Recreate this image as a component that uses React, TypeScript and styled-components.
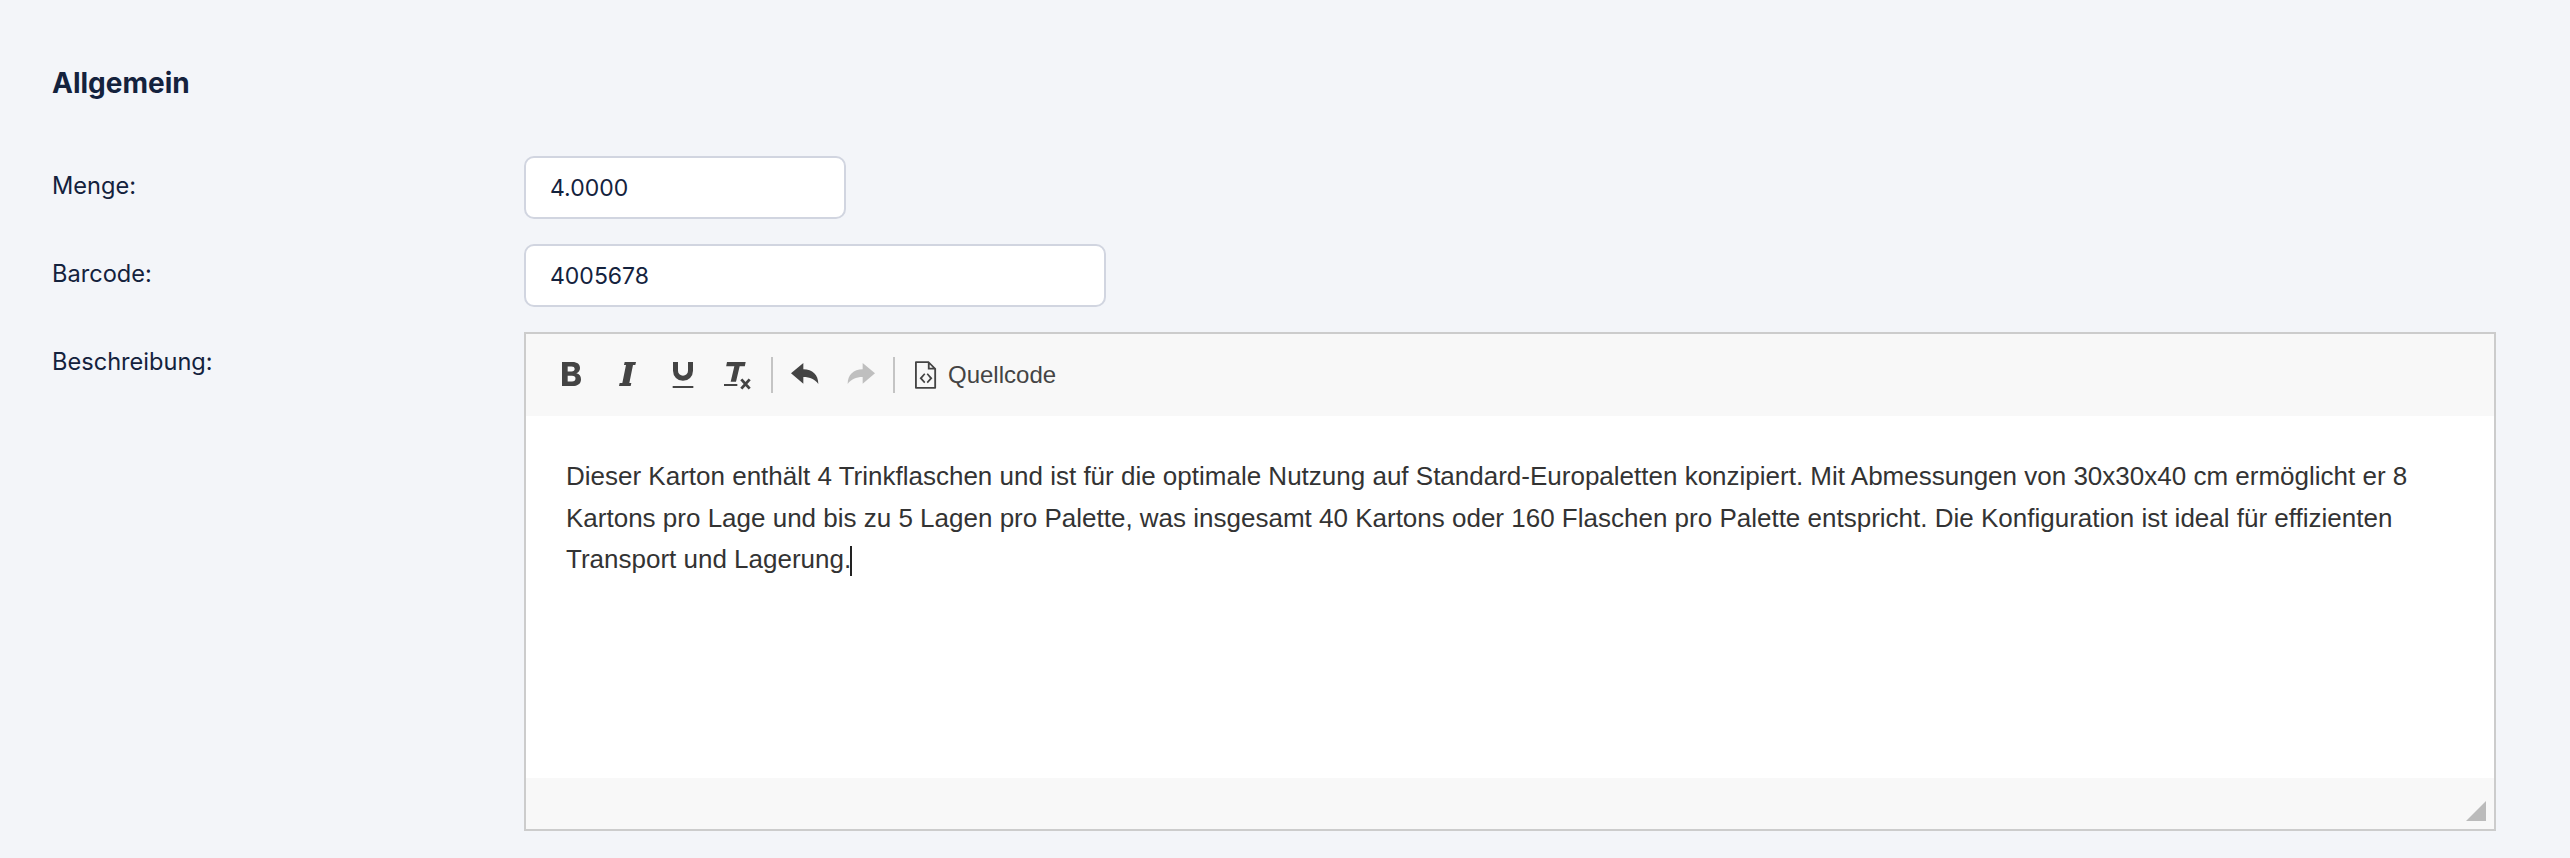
import React from "react";
import styled, { createGlobalStyle } from "styled-components";

const Global = createGlobalStyle`
  html, body { margin: 0; padding: 0; background: #f3f5f9; }
  body { font-family: Inter, "Liberation Sans", sans-serif; color: #14223d; }
`;
const Page = styled.main`
  box-sizing: border-box;
  width: 2570px;
  height: 858px;
  padding: 62px 74px 0 52px;
  overflow: hidden;
`;
const Heading = styled.h2`
  margin: 0 0 52px;
  font-size: 28px;
  line-height: 42px;
  font-weight: 700;
  color: #14223d;
`;
const Rows = styled.div`
  display: flex;
  flex-direction: column;
  gap: 25px;
`;
const Row = styled.div`
  display: grid;
  grid-template-columns: 472px 1fr;
  align-items: start;
`;
const Label = styled.label`
  padding-top: 11px;
  font-size: 23.6px;
  line-height: 38px;
  color: #14223d;
`;
const Input = styled.input<{ $w: number }>`
  box-sizing: border-box;
  display: block;
  width: ${(p) => p.$w}px;
  height: 63px;
  padding: 0 24px;
  border: 2px solid #d1d5e0;
  border-radius: 10px;
  background: #fff;
  font: 400 23px Inter, sans-serif;
  color: #14223d;
  outline: none;
`;
const Editor = styled.div`
  box-sizing: border-box;
  display: flex;
  flex-direction: column;
  height: 499px;
  border: 2px solid #cccccc;
`;
const Toolbar = styled.div`
  display: flex;
  align-items: center;
  flex: none;
  height: 82px;
  padding-left: 17px;
  background: #f8f8f8;
`;
const ToolButton = styled.button<{ $off?: boolean }>`
  display: flex;
  align-items: center;
  justify-content: center;
  width: 56px;
  height: 56px;
  padding: 0;
  border: 0;
  background: none;
  color: ${(p) => (p.$off ? "#bfbfbf" : "#444444")};
`;
const TextButton = styled(ToolButton)`
  width: auto;
  gap: 11px;
  margin-left: 16px;
  font: 400 24px "Liberation Sans", Arial, sans-serif;
  color: #444444;
`;
const Divider = styled.span`
  flex: none;
  width: 2px;
  height: 36px;
  margin: 0 4px;
  background: #c4c4c4;
`;
const Icon = styled.svg`
  width: 40px;
  height: 40px;
  fill: currentColor;
  flex: none;
`;
const FileIcon = styled.svg`
  width: 22px;
  height: 28px;
  fill: currentColor;
  flex: none;
`;
const Body = styled.div`
  flex: 1;
  padding: 40px 40px 0;
  background: #fff;
  font: 400 26px/41.6px "Liberation Sans", Arial, sans-serif;
  color: #333333;
`;
const Caret = styled.span`
  display: inline-block;
  width: 0;
  height: 30px;
  margin-left: -1px;
  border-left: 2px solid #222;
  vertical-align: -8px;
`;
const StatusBar = styled.div`
  box-sizing: border-box;
  display: flex;
  justify-content: flex-end;
  align-items: flex-end;
  flex: none;
  height: 51px;
  padding: 0 8px 8px 0;
  background: #f8f8f8;
`;
const Grip = styled.svg`
  width: 20px;
  height: 20px;
  fill: #bbbbbb;
`;

export default function App() {
  return (
    <Page>
      <Global />
      <Heading>Allgemein</Heading>
      <Rows>
        <Row>
          <Label>Menge:</Label>
          <Input $w={322} defaultValue="4.0000" />
        </Row>
        <Row>
          <Label>Barcode:</Label>
          <Input $w={582} defaultValue="4005678" />
        </Row>
        <Row>
          <Label>Beschreibung:</Label>
          <Editor>
            <Toolbar>
              <ToolButton aria-label="Fett">
                <Icon viewBox="0 0 24 24"><path fillRule="evenodd" d="M6.600 4.200h6.200c3 0 4.600 1.300 4.600 3.600 0 1.600-.8 2.700-2.200 3.200 1.800.4 2.800 1.700 2.800 3.500 0 2.700-1.900 4.100-5.200 4.100H6.600zM10 6.900v3h2.300c1.200 0 1.900-.5 1.900-1.500s-.7-1.500-1.900-1.500zM10 12.400v3.500h2.600c1.400 0 2.100-.6 2.100-1.800s-.7-1.700-2.100-1.700z" /></Icon>
              </ToolButton>
              <ToolButton aria-label="Kursiv">
                <Icon viewBox="0 0 24 24"><path d="M10.600 4.200h6.800l-.4 1.800h-1.400l-2.200 10.800h1.200l-.4 1.800h-7l.4-1.800h1.600L11.400 6h-1.200z" /></Icon>
              </ToolButton>
              <ToolButton aria-label="Unterstrichen">
                <Icon viewBox="0 0 24 24">
                  <path d="M7.500 4.200v5.300a4.500 4.500 0 0 0 9 0V4.200" fill="none" stroke="currentColor" strokeWidth="3" />
                  <path d="M5.800 18.600h12.400v1.200H5.800z" />
                </Icon>
              </ToolButton>
              <ToolButton aria-label="Formatierung entfernen">
                <Icon viewBox="0 0 24 24">
                  <path d="M4.800 4.200H16l-.5 2.500h-3.100L10.200 16H7L9.200 6.700H4.300z" />
                  <path d="M3 17.400h8v1.200H3z" />
                  <path d="M13.400 14.600l5 5.600M18.400 14.600l-5 5.600" fill="none" stroke="currentColor" strokeWidth="1.700" />
                </Icon>
              </ToolButton>
              <Divider />
              <ToolButton aria-label="Rückgängig">
                <Icon viewBox="0 0 24 24"><path d="M3.600 11L11 4.800v3.800c5.500 0 9 3.400 9 8.800-2-2.800-5-4.200-9-4.200v4z" /></Icon>
              </ToolButton>
              <ToolButton $off aria-label="Wiederholen">
                <Icon viewBox="0 0 24 24"><path d="M20.400 11L13 4.800v3.800c-5.500 0-9 3.400-9 8.800 2-2.800 5-4.200 9-4.200v4z" /></Icon>
              </ToolButton>
              <Divider />
              <TextButton aria-label="Quellcode">
                <FileIcon viewBox="0 0 24 30">
                  <path fillRule="evenodd" d="M1 0h14l8 8v21a1 1 0 0 1-1 1H1a1 1 0 0 1-1-1V1a1 1 0 0 1 1-1zm1 2v26h19V9h-7V2H2zm14 1.500V7h3.500L16 3.500z" />
                  <path d="M10 13l-5 5.500 5 5.500 1.300-1.300-3.600-4.200 3.600-4.200zM14 13l5 5.500-5 5.500-1.300-1.300 3.600-4.200-3.600-4.200z" />
                </FileIcon>
                Quellcode
              </TextButton>
            </Toolbar>
            <Body>
              Dieser Karton enthält 4 Trinkflaschen und ist für die optimale Nutzung auf Standard-Europaletten konzipiert. Mit Abmessungen von 30x30x40 cm ermöglicht er 8 Kartons pro Lage und bis zu 5 Lagen pro Palette, was insgesamt 40 Kartons oder 160 Flaschen pro Palette entspricht. Die Konfiguration ist ideal für effizienten Transport und Lagerung.<Caret />
            </Body>
            <StatusBar>
              <Grip viewBox="0 0 20 20"><path d="M20 0v20H0z" /></Grip>
            </StatusBar>
          </Editor>
        </Row>
      </Rows>
    </Page>
  );
}
